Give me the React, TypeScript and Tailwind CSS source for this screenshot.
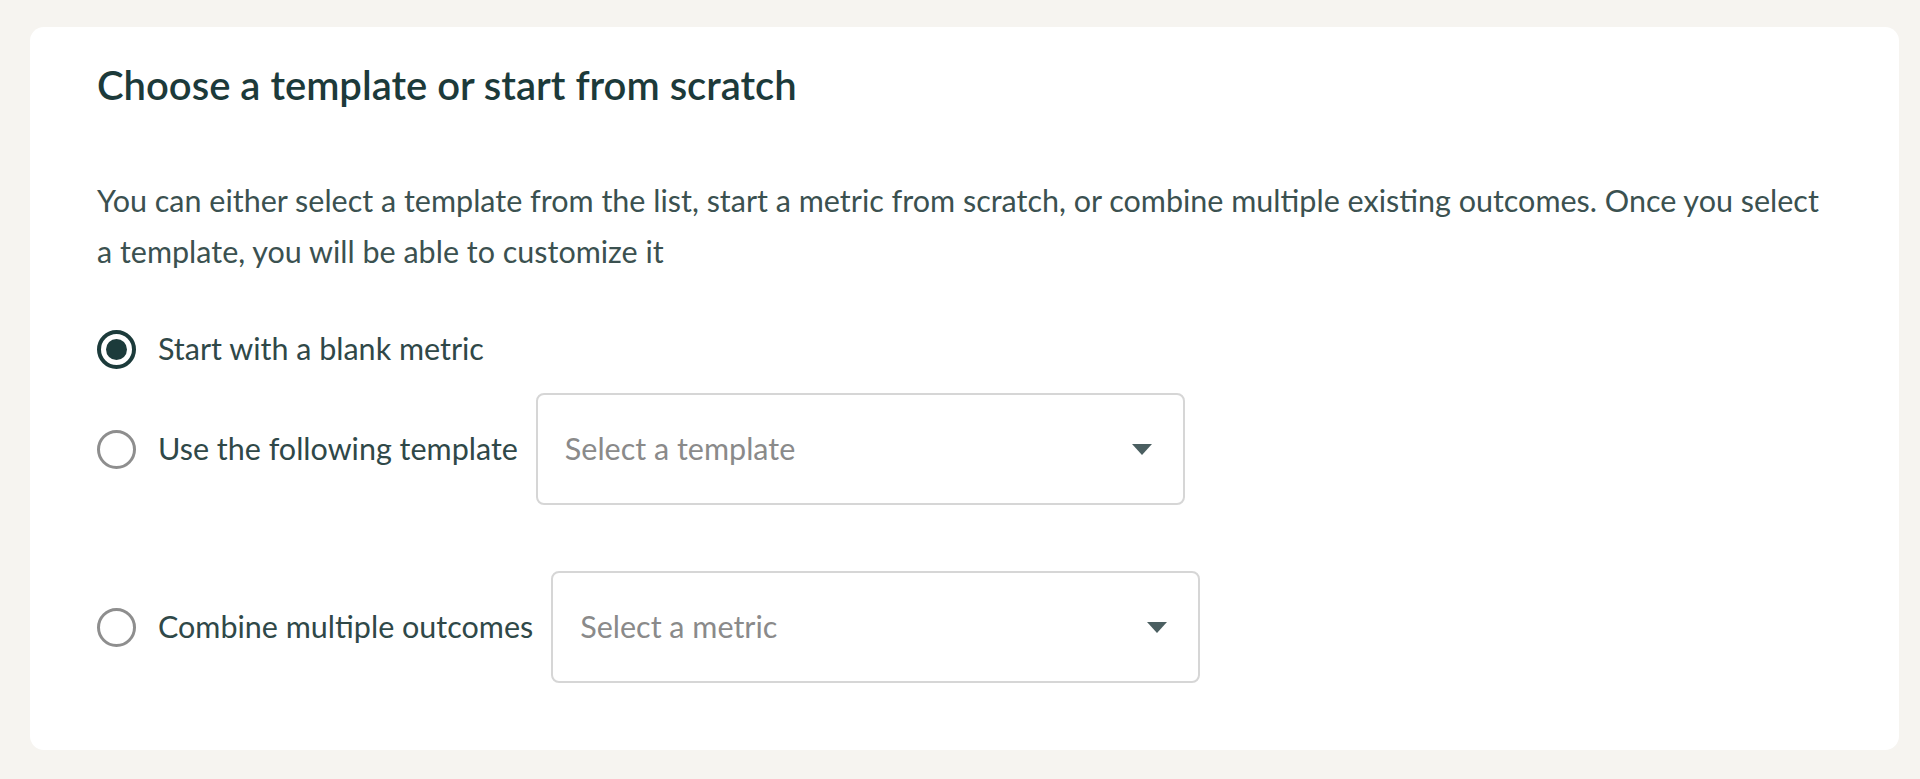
import { useState } from 'react';

type Option = {
  id: string;
  label: string;
  placeholder?: string;
};

const OPTIONS: Option[] = [
  { id: 'blank', label: 'Start with a blank metric' },
  { id: 'template', label: 'Use the following template', placeholder: 'Select a template' },
  { id: 'combine', label: 'Combine multiple outcomes', placeholder: 'Select a metric' },
];

function Radio({ checked }: { checked: boolean }) {
  if (checked) {
    return (
      <span className="w-[39px] h-[39px] shrink-0 rounded-full border-[4px] border-[#1c3b3b] flex items-center justify-center">
        <span className="w-[21px] h-[21px] rounded-full bg-[#1c3b3b]" />
      </span>
    );
  }
  return <span className="w-[39px] h-[39px] shrink-0 rounded-full border-[3px] border-[#8e8e8e]" />;
}

function SelectBox({ placeholder }: { placeholder: string }) {
  return (
    <div className="ml-[18px] w-[649px] h-[112px] shrink-0 rounded-[8px] border-2 border-[#d6d6d6] bg-white flex items-center justify-between pl-[27px] pr-[31px] cursor-pointer">
      <span className="text-[#8a8a8a]">{placeholder}</span>
      <svg width="20" height="11" viewBox="0 0 20 11" className="shrink-0">
        <path d="M0 0 H20 L10 11 Z" fill="#4b5f61" />
      </svg>
    </div>
  );
}

export default function App() {
  const [selected, setSelected] = useState('blank');

  return (
    <div
      className="min-h-screen bg-[#f6f4f0] pt-[27px] pl-[30px] pr-[21px] pb-[31px]"
      style={{ fontFamily: 'Lato, "Noto Sans", sans-serif' }}
    >
      <div className="bg-white rounded-[14px] pl-[67px] pr-[50px] pt-[34px] pb-[67px]">
        <h2 className="text-[40px] leading-[48px] font-semibold text-[#1c3a3a]">
          Choose a template or start from scratch
        </h2>

        <p className="mt-[66px] text-[30.5px] leading-[51px] text-[#3b5150] max-w-[1735px]">
          You can either select a template from the list, start a metric from scratch, or combine multiple existing
          outcomes. Once you select a template, you will be able to customize it
        </p>

        <div className="mt-[52px] flex flex-col text-[30.5px] text-[#2f4848]">
          {OPTIONS.map((opt, i) => (
            <div
              key={opt.id}
              className={
                i === 0
                  ? 'flex items-center h-[40px]'
                  : i === 1
                    ? 'flex items-center mt-[24px]'
                    : 'flex items-center mt-[66px]'
              }
              onClick={() => setSelected(opt.id)}
            >
              <Radio checked={selected === opt.id} />
              <span className="ml-[22px] whitespace-nowrap">{opt.label}</span>
              {opt.placeholder && <SelectBox placeholder={opt.placeholder} />}
            </div>
          ))}
        </div>
      </div>
    </div>
  );
}
